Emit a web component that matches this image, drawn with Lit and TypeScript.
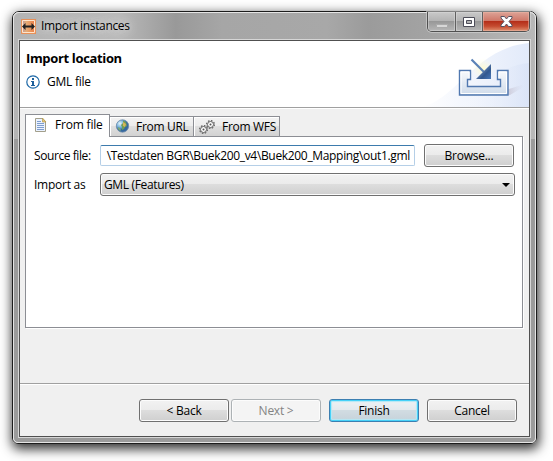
import { LitElement, html, css, svg } from "lit";
import { customElement } from "lit/decorators.js";

const gear = (x: number, y: number) => svg`
  <g transform="translate(${x} ${y})" fill="none">
    <circle r="3.9" stroke="#555" stroke-width="1.1" stroke-dasharray="1.55 1.51"/>
    <circle r="3" stroke="#555" stroke-width=".9" fill="#fafafa"/>
    <circle r="1" fill="#555"/>
  </g>`;

@customElement("app-root")
export class AppRoot extends LitElement {
  static styles = css`
    :host { display: block; box-sizing: border-box; width: 553px; height: 461px; padding: 11px 16px 17px 12px; background: #fff; overflow: hidden;
      font: 12px/16px "Open Sans", "Noto Sans", sans-serif; letter-spacing: -0.25px; color: #000; }
    * { box-sizing: border-box; }
    svg { display: block; flex: none; }
    span { white-space: nowrap; }
    .window { width: 525px; height: 433px; border: 1px solid #1c1c1c; border-radius: 7px 7px 6px 6px;
      box-shadow: 1px 4px 12px 1px rgba(0,0,0,.82); }
    .frame { height: 431px; border: 1px solid #e4e4e4; border-radius: 6px 6px 5px 5px; padding: 0 4px 4px; display: flex; flex-direction: column;
      background: linear-gradient(#0000 0 126px, #9b9b9b 126px), linear-gradient(90deg, #b4b4b4, #bababa 20%, #999 31%, #a6a6a6 40%, #a8a8a8 60%, #9b9b9b 68%, #a7a7a7 85%, #b8b8b8); }
    .title { height: 26px; display: flex; align-items: center; padding: 0 0 0 3px; position: relative; }
    .title span { margin-left: 5px; text-shadow: 0 0 7px #ddd, 0 0 12px #ddd; letter-spacing: -0.33px; }
    .controls { position: absolute; right: 1px; top: -1px; height: 20px; width: 103px; display: flex; border: 1px solid #505050; border-top: 0; border-radius: 0 0 5px 5px; overflow: hidden; box-shadow: 0 0 0 1px #ddd8; }
    .ctl { width: 28px; display: grid; place-items: center; background: linear-gradient(#c9c9c9, #b4b4b4 45%, #989898 50%, #b7b7b7); border-right: 1px solid #606060; box-shadow: inset 0 0 0 1px #d9d9d988; }
    .max { width: 27px; }
    .close { flex: 1; border: 0; background: linear-gradient(#dda397, #cf796a 45%, #b52f1a 50%, #c54c31 75%, #df9170); box-shadow: inset 0 0 0 1px #eab4a399; }
    .close svg { margin-top: -1px; }
    .edge { border: 1px solid #d6d6d6; height: 399px; }
    .client { height: 397px; border: 1px solid #505050; background: #f0f0f0; display: flex; flex-direction: column; }
    .header { height: 67px; background: #fff; border-bottom: 1px solid #a0a0a0; display: flex; justify-content: space-between; padding-left: 6px; }
    .heading { padding-top: 8px; }
    .heading b { display: block; font-size: 13px; line-height: 18px; letter-spacing: -0.35px; }
    .info { display: flex; align-items: center; gap: 7px; margin-top: 7px; }
    .body { border-top: 1px solid #fff; height: 275px; padding: 5px 6px 0 5px; }
    .tabs { display: flex; align-items: flex-end; height: 22px; }
    .tab { height: 20px; width: 85px; display: flex; align-items: center; border: 1px solid #8c8e94; border-bottom: 0; border-left: 0; background: linear-gradient(#f3f3f3, #ececec 49%, #dfdfdf 50%, #d2d2d2); padding-left: 5px; box-shadow: inset 1px 1px #fff; letter-spacing: -0.3px; }
    .tab span { margin-left: 6px; }
    .tab:nth-child(2) { width: 84px; }
    .tab:nth-child(3) { width: 86px; }
    .tab.on { height: 23px; width: 85px; margin-bottom: -1px; background: #fff; border-left: 1px solid #8c8e94; padding: 0 0 2px 8px; position: relative; letter-spacing: -0.2px; }
    .tab.on span { margin-left: 7px; }
    .panel { height: 192px; border: 1px solid #8c8e94; background: #fff; box-shadow: 1px 1px #fff; padding: 7px 6px 0 8px; }
    .row { display: flex; align-items: center; height: 23px; }
    .row + .row { margin-top: 6px; }
    .label { width: 66px; letter-spacing: -0.42px; }
    .row + .row .label { letter-spacing: -0.25px; }
    .input { width: 315px; height: 21px; border: 1px solid #b5cfe7; border-top-color: #3d7bad; border-radius: 2px; display: flex; align-items: center; justify-content: flex-end; padding-right: 4px; margin-right: 9px; letter-spacing: -0.33px; overflow: hidden; }
    .btn { width: 90px; height: 23px; border: 1px solid #707070; border-radius: 3px; box-shadow: inset 0 0 0 1px #fcfcfc; display: flex; align-items: center; justify-content: center; background: linear-gradient(#f2f2f2, #ebebeb 49%, #dddddd 50%, #cfcfcf); }
    .combo { width: 415px; justify-content: space-between; padding: 0 4px 0 3px; letter-spacing: -0.35px; }
    .off { border-color: #adb2b5; background: #f4f4f4; color: #838383; }
    .def { border-color: #3c7fb1; box-shadow: inset 0 0 0 1px #46d1f8, inset 0 0 1px 2px #b4e8f6; background: linear-gradient(#eef2f4, #e3e9ed 49%, #d1dce2 50%, #c6d2da); }
    .footer { height: 53px; border-top: 1px solid #a0a0a0; box-shadow: inset 0 1px #fff; padding: 15px 12px 0 0; display: flex; justify-content: flex-end; gap: 8px; }
    .off { margin-left: -6px; }
  `;

  render() {
    return html`
      <div class="window"><div class="frame">
        <div class="title">
          <svg width="15" height="15" viewBox="0 0 15 15">
            <defs><linearGradient id="a"><stop stop-color="#ad92ac"/><stop offset=".35" stop-color="#e3ad78"/><stop offset="1" stop-color="#f0763c"/></linearGradient></defs>
            <path fill="url(#a)" d="M0 0h15v15H0z"/><path d="M.5.5h14v14H.5z" fill="none" stroke="#e79159"/><path d="M1.500 1.500h12v12h-12z" fill="none" stroke="#ffe4cb"/>
            <path d="M1 7.500 4.500 4v2.500h6V4L14 7.500 10.500 11V8.500h-6V11z" fill="#222"/>
          </svg>
          <span>Import instances</span>
          <div class="controls">
            <div class="ctl"><svg width="12" height="14"><path d="M.5 9.500h11v3H.5z" fill="#d7d7d7" stroke="#aaa"/></svg></div>
            <div class="ctl max"><svg width="12" height="10"><path d="M.5.5h11v9H.5z" fill="#fff" stroke="#4d4d59"/><path d="M3.500 3.500h5v3h-5z" fill="#b5b5b5" stroke="#4d4d59"/></svg></div>
            <div class="ctl close"><svg width="13" height="11"><path d="M1 .5h3.500l2 2.500 2-2.500H12v1.500L9 5.500 12 9v1.500H8.500l-2-2.500-2 2.500H1V9l3-3.500L1 2z" fill="#fff" stroke="#555363"/></svg></div>
          </div>
        </div>
        <div class="edge"><div class="client">
          <div class="header">
            <div class="heading">
              <b>Import location</b>
              <div class="info">
                <svg width="14" height="14"><circle cx="7" cy="7" r="6.200" fill="#fff" stroke="#1d68a7" stroke-width="1.200"/><path d="M6 3h2v2H6zM5 6h3v4h1v1H5v-1h1V7H5z" fill="#1d5f9b"/></svg>
                <span>GML file</span>
              </div>
            </div>
            <svg width="109" height="66" viewBox="420 41 109 66">
              <defs>
                <linearGradient id="b"><stop stop-color="#fff"/><stop offset="1" stop-color="#e2eafa"/></linearGradient>
                <linearGradient id="c"><stop stop-color="#fff" stop-opacity="0"/><stop offset="1" stop-color="#d7e1f6"/></linearGradient>
                <linearGradient id="t" x2="0" y2="1"><stop stop-color="#f8fafd"/><stop offset="1" stop-color="#cfdbea"/></linearGradient>
                <linearGradient id="h" x1="0" y1="0" x2="1" y2="1"><stop stop-color="#b7cae8"/><stop offset=".65" stop-color="#32588f"/><stop offset="1" stop-color="#4978b8"/></linearGradient>
                <radialGradient id="y"><stop stop-color="#fffbcf"/><stop offset="1" stop-color="#fffde8" stop-opacity="0"/></radialGradient>
                <linearGradient id="s"><stop stop-color="#b5a9b7"/><stop offset="1" stop-color="#d7dff2" stop-opacity="0"/></linearGradient>
              </defs>
              <path d="M420 107C455 102 475 48 529 43V107z" fill="url(#b)"/>
              <path d="M455 107C480 101 490 66 529 63V107z" fill="url(#c)" opacity=".7"/>
              <path d="M506 95 506 90 525 84 522 88 510 95z" fill="url(#s)" opacity=".6"/>
              <circle cx="483" cy="69" r="11" fill="url(#y)"/>
              <path d="M459.500 70.500h11v9h-3v7h33v-7h-3v-9h10.500v24.500h-48.500z" fill="url(#t)" stroke="#5078b0" stroke-width="1.400"/>
              <path d="M461 72h8v6M461 72v21.500h45.500V72h-7.500v6" fill="none" stroke="#fff"/>
              <path d="m471.500 59.500 13 13" stroke="#5b82b6" stroke-width="2.200"/>
              <path d="M491 64v15h-15z" fill="url(#h)"/>
            </svg>
          </div>
          <div class="body">
            <div class="tabs">
              <div class="tab on">
                <svg width="14" height="16" viewBox="0 0 14 16"><path d="M1.500 1.500h7l3 3v10h-10z" fill="#eaf2ff" stroke="#a39f8b"/><path d="M8.500 1v4H12z" fill="#e8c878" stroke="#b39950" stroke-width=".7"/><path d="M3 4.500h4M3 6.500h7M3 8.500h7M3 10.500h7M3 12.500h7" stroke="#7e9dce"/></svg>
                <span>From file</span>
              </div>
              <div class="tab">
                <svg width="15" height="15"><defs><radialGradient id="g" cx=".3" cy=".3"><stop stop-color="#e7f7fc"/><stop offset=".6" stop-color="#76b2dc"/><stop offset="1" stop-color="#3568a0"/></radialGradient></defs><circle cx="7.500" cy="7" r="6.200" fill="url(#g)" stroke="#6d8aa8" stroke-width=".8"/><path d="M8 1.500 11 3l1 4-2 1-1 2-2 1v-3l-1-2 2-2z" fill="#6e9d58"/><path d="M3 8l2 1 1 2-1 1-2-2z" fill="#78a977"/><path d="m8 3 3 2-1 3-2-1z" fill="#d8b458"/></svg>
                <span>From URL</span>
              </div>
              <div class="tab">
                <svg width="17" height="16">${gear(4.5, 10.5)}${gear(11.5, 5.5)}</svg>
                <span>From WFS</span>
              </div>
            </div>
            <div class="panel">
              <div class="row"><span class="label">Source file:</span><div class="input"><span>\\Testdaten BGR\\Buek200_v4\\Buek200_Mapping\\out1.gml</span></div><div class="btn"><span>Browse...</span></div></div>
              <div class="row"><span class="label">Import as</span><div class="btn combo"><span>GML (Features)</span><svg width="8" height="4"><path d="M0 0h8L4 4z"/></svg></div></div>
            </div>
          </div>
          <div class="footer">
            <div class="btn"><span>&lt; Back</span></div>
            <div class="btn off"><span>Next &gt;</span></div>
            <div class="btn def"><span>Finish</span></div>
            <div class="btn"><span>Cancel</span></div>
          </div>
        </div></div>
      </div></div>`;
  }
}
